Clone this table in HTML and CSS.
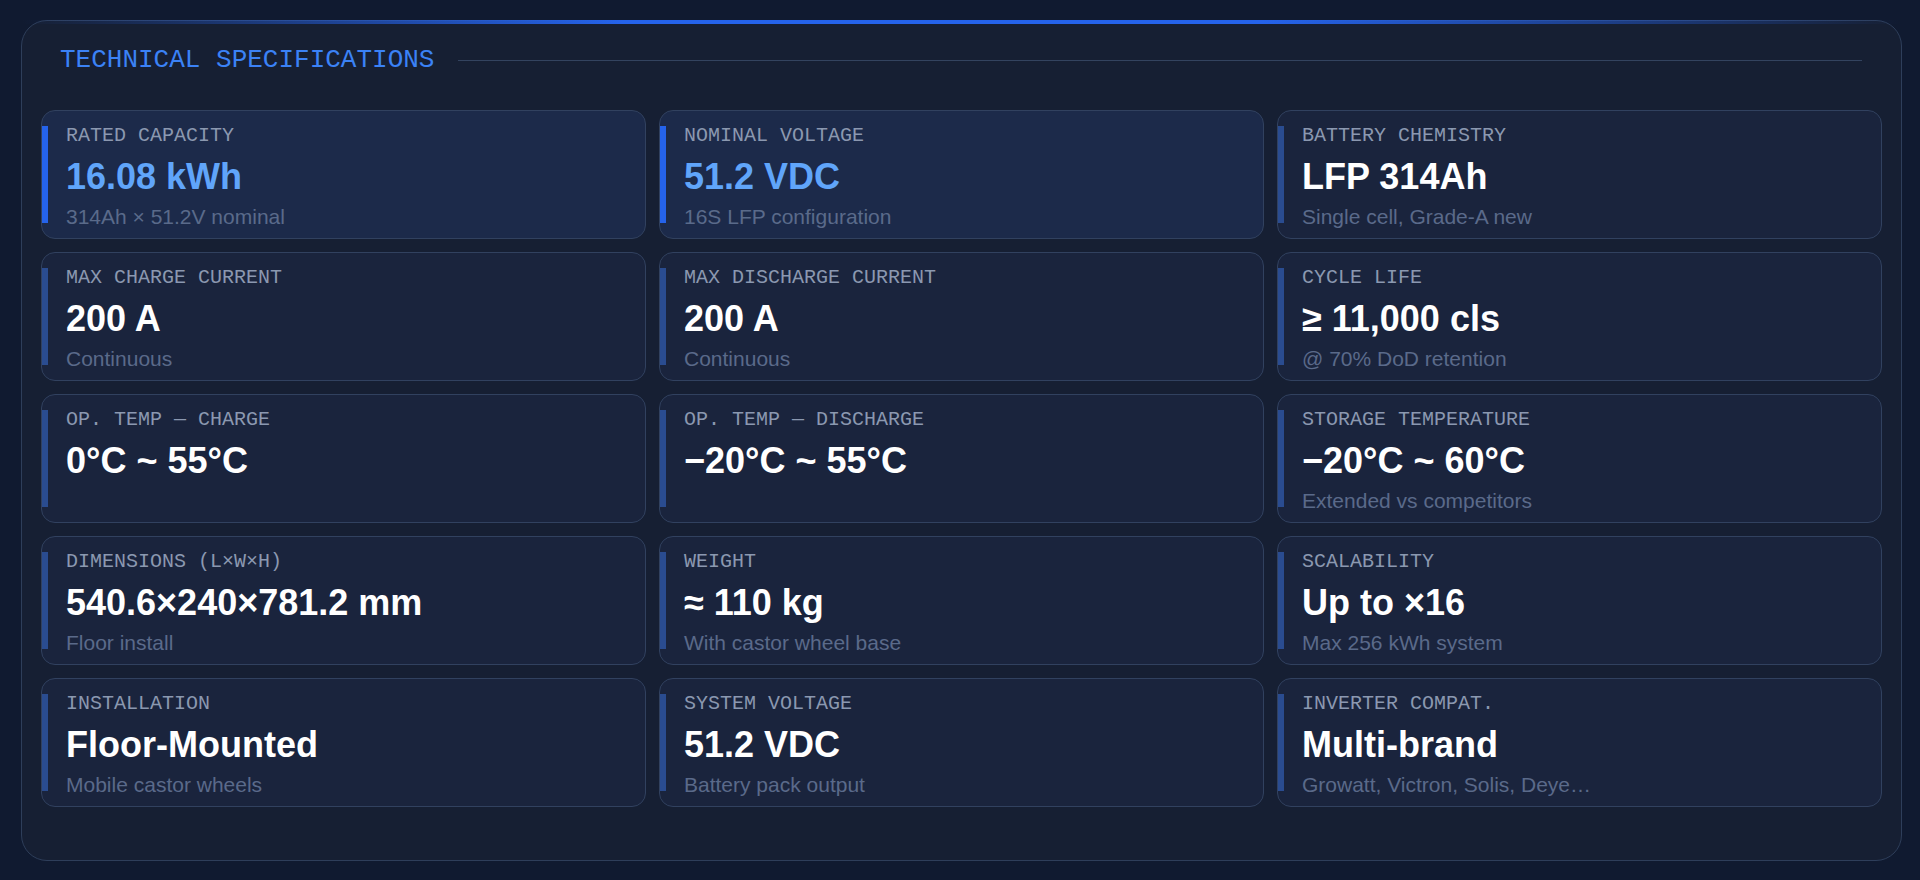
FILE: index.html
```html
<!DOCTYPE html>
<html lang="en">
<head>
<meta charset="utf-8">
<title>Technical Specifications</title>
<link rel="stylesheet" href="styles.css">
</head>
<body>
<section class="panel">
  <header class="panel-head">
    <h2 class="panel-title">TECHNICAL SPECIFICATIONS</h2>
    <div class="panel-rule"></div>
  </header>
  <div class="spec-grid">
    <div class="spec spec-hl">
      <div class="spec-label">RATED CAPACITY</div>
      <div class="spec-value">16.08 kWh</div>
      <div class="spec-sub">314Ah × 51.2V nominal</div>
    </div>
    <div class="spec spec-hl">
      <div class="spec-label">NOMINAL VOLTAGE</div>
      <div class="spec-value">51.2 VDC</div>
      <div class="spec-sub">16S LFP configuration</div>
    </div>
    <div class="spec">
      <div class="spec-label">BATTERY CHEMISTRY</div>
      <div class="spec-value">LFP 314Ah</div>
      <div class="spec-sub">Single cell, Grade-A new</div>
    </div>

    <div class="spec">
      <div class="spec-label">MAX CHARGE CURRENT</div>
      <div class="spec-value">200 A</div>
      <div class="spec-sub">Continuous</div>
    </div>
    <div class="spec">
      <div class="spec-label">MAX DISCHARGE CURRENT</div>
      <div class="spec-value">200 A</div>
      <div class="spec-sub">Continuous</div>
    </div>
    <div class="spec">
      <div class="spec-label">CYCLE LIFE</div>
      <div class="spec-value">≥ 11,000 cls</div>
      <div class="spec-sub">@ 70% DoD retention</div>
    </div>

    <div class="spec">
      <div class="spec-label">OP. TEMP — CHARGE</div>
      <div class="spec-value">0°C ~ 55°C</div>
    </div>
    <div class="spec">
      <div class="spec-label">OP. TEMP — DISCHARGE</div>
      <div class="spec-value">−20°C ~ 55°C</div>
    </div>
    <div class="spec">
      <div class="spec-label">STORAGE TEMPERATURE</div>
      <div class="spec-value">−20°C ~ 60°C</div>
      <div class="spec-sub">Extended vs competitors</div>
    </div>

    <div class="spec">
      <div class="spec-label">DIMENSIONS (L×W×H)</div>
      <div class="spec-value">540.6×240×781.2 mm</div>
      <div class="spec-sub">Floor install</div>
    </div>
    <div class="spec">
      <div class="spec-label">WEIGHT</div>
      <div class="spec-value">≈ 110 kg</div>
      <div class="spec-sub">With castor wheel base</div>
    </div>
    <div class="spec">
      <div class="spec-label">SCALABILITY</div>
      <div class="spec-value">Up to ×16</div>
      <div class="spec-sub">Max 256 kWh system</div>
    </div>

    <div class="spec">
      <div class="spec-label">INSTALLATION</div>
      <div class="spec-value">Floor-Mounted</div>
      <div class="spec-sub">Mobile castor wheels</div>
    </div>
    <div class="spec">
      <div class="spec-label">SYSTEM VOLTAGE</div>
      <div class="spec-value">51.2 VDC</div>
      <div class="spec-sub">Battery pack output</div>
    </div>
    <div class="spec">
      <div class="spec-label">INVERTER COMPAT.</div>
      <div class="spec-value">Multi-brand</div>
      <div class="spec-sub">Growatt, Victron, Solis, Deye…</div>
    </div>
  </div>
</section>
</body>
</html>
```
FILE: styles.css
```css
* { box-sizing: border-box; }

html, body {
  margin: 0;
  height: 100%;
}

body {
  background: #101a30;
  padding: 20px 18px 0 21px;
  font-family: "Liberation Sans", Arial, sans-serif;
  color: #ffffff;
}

.panel {
  position: relative;
  background: #161f33;
  border: 1px solid #2e3e5a;
  border-radius: 26px;
  padding: 24px 19px 53px 19px;
}

.panel::before {
  content: "";
  position: absolute;
  top: -1px;
  left: 0;
  right: 0;
  height: 4px;
  background: linear-gradient(90deg, rgba(37, 99, 235, 0) 0%, #2563eb 32%, #2563eb 66%, rgba(37, 99, 235, 0) 100%);
}

.panel-head {
  display: flex;
  align-items: center;
  gap: 24px;
  padding: 0 20px 0 19px;
  height: 30px;
  margin-bottom: 35px;
}

.panel-title {
  margin: 0;
  font-family: "Liberation Mono", "DejaVu Sans Mono", monospace;
  font-weight: 400;
  font-size: 26px;
  line-height: 30px;
  color: #3b82f6;
  white-space: nowrap;
}

.panel-rule {
  flex: 1;
  height: 1px;
  background: #33435f;
}

.spec-grid {
  display: grid;
  grid-template-columns: repeat(3, 1fr);
  gap: 13px;
}

.spec {
  position: relative;
  background: #1a243d;
  border: 1px solid #31415f;
  border-radius: 14px;
  padding: 13px 20px 8px 24px;
}

.spec::before {
  content: "";
  position: absolute;
  left: 0;
  top: 15px;
  bottom: 15px;
  width: 6px;
  background: #2a4c90;
}

.spec-hl {
  background: #1c2a4a;
}

.spec-hl::before {
  background: #2563eb;
}

.spec-label {
  font-family: "Liberation Mono", "DejaVu Sans Mono", monospace;
  font-size: 20px;
  line-height: 24px;
  color: #8b98b0;
  white-space: nowrap;
}

.spec-value {
  margin-top: 8px;
  font-size: 36px;
  line-height: 42px;
  font-weight: 700;
  color: #ffffff;
  white-space: nowrap;
}

.spec-hl .spec-value {
  color: #60a5fa;
}

.spec-sub {
  margin-top: 6px;
  font-size: 21px;
  line-height: 26px;
  color: #5a6a8a;
  white-space: nowrap;
}
```
